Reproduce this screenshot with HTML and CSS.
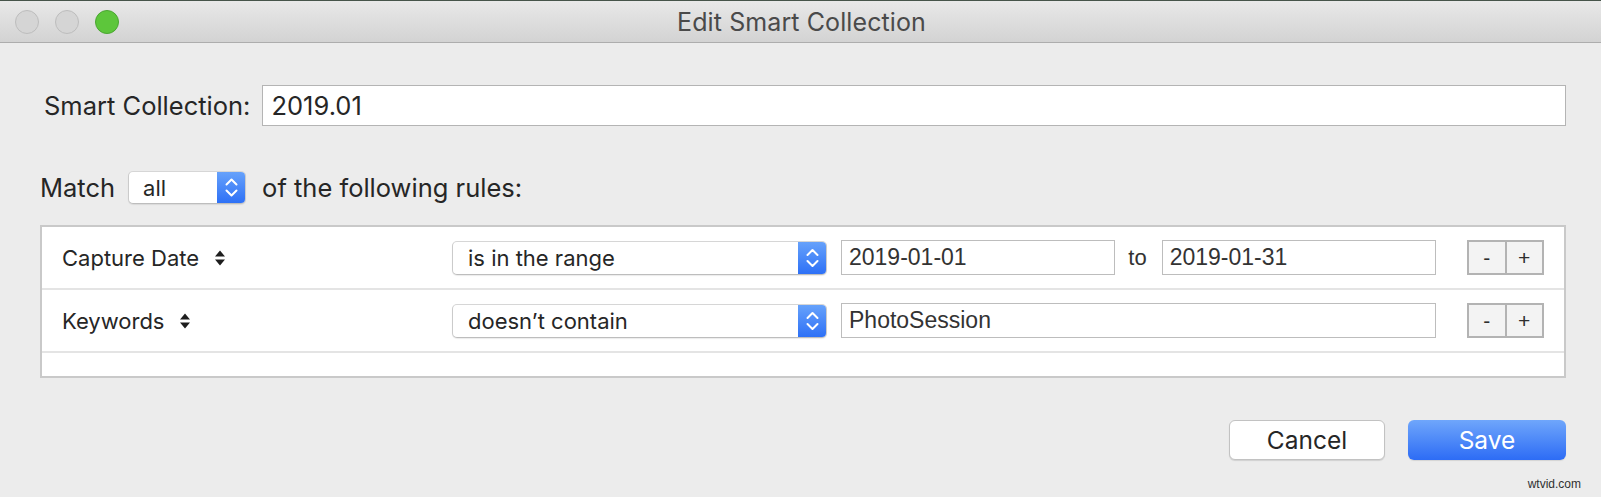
FILE: index.html
```html
<!DOCTYPE html>
<html lang="en">
<head>
<meta charset="utf-8">
<title>Edit Smart Collection</title>
<link rel="stylesheet" href="styles.css">
</head>
<body>
<div class="window">
  <header class="titlebar">
    <div class="lights">
      <span class="light gray"></span>
      <span class="light gray"></span>
      <span class="light green"></span>
    </div>
    <div class="title">Edit Smart Collection</div>
    <div class="spacer"></div>
  </header>

  <main class="content">
    <div class="name-row">
      <label class="name-label">Smart Collection:</label>
      <div class="field field-name">2019.01</div>
    </div>

    <div class="match-row">
      <span>Match</span>
      <div class="popup popup-match">
        <span class="popup-text">all</span>
        <span class="stepper">
          <svg width="29" height="33" viewBox="0 0 29 33"><path d="M9.5 13.5 L14.5 8.5 L19.5 13.5 M9.5 19.5 L14.5 24.5 L19.5 19.5" fill="none" stroke="#fff" stroke-width="2" stroke-linecap="round" stroke-linejoin="round"/></svg>
        </span>
      </div>
      <span>of the following rules:</span>
    </div>

    <div class="rules">
      <div class="rule">
        <div class="rule-field">
          <span>Capture Date</span>
          <svg class="updown" width="12" height="16" viewBox="0 0 12 16"><path d="M1 6.5 L6 0.5 L11 6.5 Z M1 9.5 L11 9.5 L6 15.5 Z" fill="#1e1e1e"/></svg>
        </div>
        <div class="popup popup-op">
          <span class="popup-text">is in the range</span>
          <span class="stepper">
            <svg width="29" height="34" viewBox="0 0 29 34"><path d="M9.5 14 L14.5 9 L19.5 14 M9.5 20 L14.5 25 L19.5 20" fill="none" stroke="#fff" stroke-width="2" stroke-linecap="round" stroke-linejoin="round"/></svg>
          </span>
        </div>
        <div class="values">
          <div class="field field-rule">2019-01-01</div>
          <span class="to">to</span>
          <div class="field field-rule">2019-01-31</div>
        </div>
        <div class="pm">
          <span class="pm-btn">-</span>
          <span class="pm-btn">+</span>
        </div>
      </div>

      <div class="rule">
        <div class="rule-field">
          <span>Keywords</span>
          <svg class="updown" width="12" height="16" viewBox="0 0 12 16"><path d="M1 6.5 L6 0.5 L11 6.5 Z M1 9.5 L11 9.5 L6 15.5 Z" fill="#1e1e1e"/></svg>
        </div>
        <div class="popup popup-op">
          <span class="popup-text">doesn’t contain</span>
          <span class="stepper">
            <svg width="29" height="34" viewBox="0 0 29 34"><path d="M9.5 14 L14.5 9 L19.5 14 M9.5 20 L14.5 25 L19.5 20" fill="none" stroke="#fff" stroke-width="2" stroke-linecap="round" stroke-linejoin="round"/></svg>
          </span>
        </div>
        <div class="values">
          <div class="field field-rule">PhotoSession</div>
        </div>
        <div class="pm">
          <span class="pm-btn">-</span>
          <span class="pm-btn">+</span>
        </div>
      </div>

      <div class="rule-empty"></div>
    </div>

    <div class="actions">
      <span class="btn btn-cancel">Cancel</span>
      <span class="btn btn-save">Save</span>
    </div>
  </main>

  <div class="watermark">wtvid.com</div>
</div>
</body>
</html>
```

FILE: styles.css
```css
* { box-sizing: border-box; }

html, body {
  margin: 0;
  padding: 0;
}

body {
  background: #ececec;
  font-family: "Inter", "Noto Sans", sans-serif;
  color: #262626;
  width: 1601px;
  height: 497px;
  overflow: hidden;
}

.window {
  position: relative;
  height: 497px;
}

/* Title bar */
.titlebar {
  height: 43px;
  display: grid;
  grid-template-columns: 1fr auto 1fr;
  align-items: center;
  background: linear-gradient(#e8e8e8, #d3d3d3);
  border-top: 1px solid #46544a;
  border-bottom: 1px solid #adadad;
}

.lights {
  display: flex;
  gap: 16px;
  padding-left: 15px;
}

.light {
  width: 24px;
  height: 24px;
  border-radius: 50%;
  display: block;
}

.light.gray {
  background: #d5d5d5;
  border: 1px solid #bdbdbd;
}

.light.green {
  background: #5dc63b;
  border: 1px solid #4aa631;
}

.title {
  font-size: 25px;
  color: #4a4a4a;
  letter-spacing: 0.1px;
  padding-left: 2px;
}

/* Content */
.content {
  padding: 0 35px 0 40px;
}

.name-row {
  display: flex;
  align-items: center;
  gap: 12px;
  margin-top: 42px;
  padding-left: 4px;
}

.name-label {
  font-size: 25.5px;
}

.field {
  background: #fff;
  border: 1px solid #bdbdbd;
}

.field-name {
  flex: 1;
  height: 41px;
  font-size: 25.5px;
  padding: 0 0 0 8px;
  display: flex;
  align-items: center;
  border-color: #b4b4b4;
}

.match-row {
  display: flex;
  align-items: center;
  margin-top: 45px;
  height: 33px;
  font-size: 25.5px;
}

.popup {
  display: flex;
  align-items: stretch;
  background: #fff;
  border: 1px solid #cbcbcb;
  border-top-color: #d6d6d6;
  border-bottom-color: #bdbdbd;
  border-radius: 5px;
  box-shadow: 0 1px 1px rgba(0, 0, 0, 0.08);
  overflow: hidden;
}

.popup-text {
  flex: 1;
  display: flex;
  align-items: center;
}

.stepper {
  width: 29px;
  display: flex;
  align-items: center;
  justify-content: center;
  background: linear-gradient(#68a3fb, #2c6ff6);
  margin: -1px -1px -1px 0;
  border-radius: 0 5px 5px 0;
}

.popup-match {
  width: 118px;
  height: 33px;
  margin: 0 16px 0 13px;
  font-size: 22px;
}

.popup-match .popup-text {
  padding-left: 14px;
}

/* Rules box */
.rules {
  margin-top: 21px;
  background: #fff;
  border: 2px solid #c9c9c9;
}

.rule {
  display: flex;
  align-items: center;
  height: 63px;
  padding: 0 20px;
  border-bottom: 2px solid #e4e4e4;
}

.rule-empty {
  height: 23px;
}

.rule-field {
  width: 390px;
  display: flex;
  align-items: center;
  gap: 15px;
  font-size: 22px;
}

.popup-op {
  width: 375px;
  height: 34px;
  font-size: 22px;
}

.popup-op .popup-text {
  padding-left: 15px;
}

.values {
  flex: 1;
  display: flex;
  align-items: center;
  margin-left: 14px;
}

.field-rule {
  flex: 1;
  height: 35px;
  display: flex;
  align-items: center;
  padding-left: 7px;
  font-family: "Liberation Sans", Arial, sans-serif;
  font-size: 23px;
  color: #333;
}

.to {
  font-family: "Liberation Sans", Arial, sans-serif;
  font-size: 22px;
  margin: 0 15px 0 13px;
  color: #333;
}

.pm {
  display: flex;
  margin-left: 31px;
  width: 77px;
  height: 35px;
  border: 2px solid #b3b3b3;
  background: #f3f3f3;
}

.pm-btn {
  flex: 1;
  display: flex;
  align-items: center;
  justify-content: center;
  font-family: "Liberation Sans", Arial, sans-serif;
  font-size: 21px;
  color: #2e2e2e;
}

.pm-btn + .pm-btn {
  border-left: 2px solid #b3b3b3;
}

/* Actions */
.actions {
  display: flex;
  justify-content: flex-end;
  gap: 23px;
  margin-top: 42px;
}

.btn {
  height: 40px;
  border-radius: 6px;
  display: flex;
  align-items: center;
  justify-content: center;
  font-size: 24.5px;
}

.btn-cancel {
  width: 156px;
  background: #fff;
  border: 1px solid #c2c2c2;
  box-shadow: 0 1px 1px rgba(0, 0, 0, 0.12);
  color: #262626;
}

.btn-save {
  width: 158px;
  background: linear-gradient(#6fa6fb, #2d6cf5);
  color: #fff;
  box-shadow: 0 1px 1px rgba(0, 0, 0, 0.1);
}

.watermark {
  position: absolute;
  right: 20px;
  bottom: 6px;
  font-family: "Liberation Sans", Arial, sans-serif;
  font-size: 12px;
  color: #303030;
}
```
